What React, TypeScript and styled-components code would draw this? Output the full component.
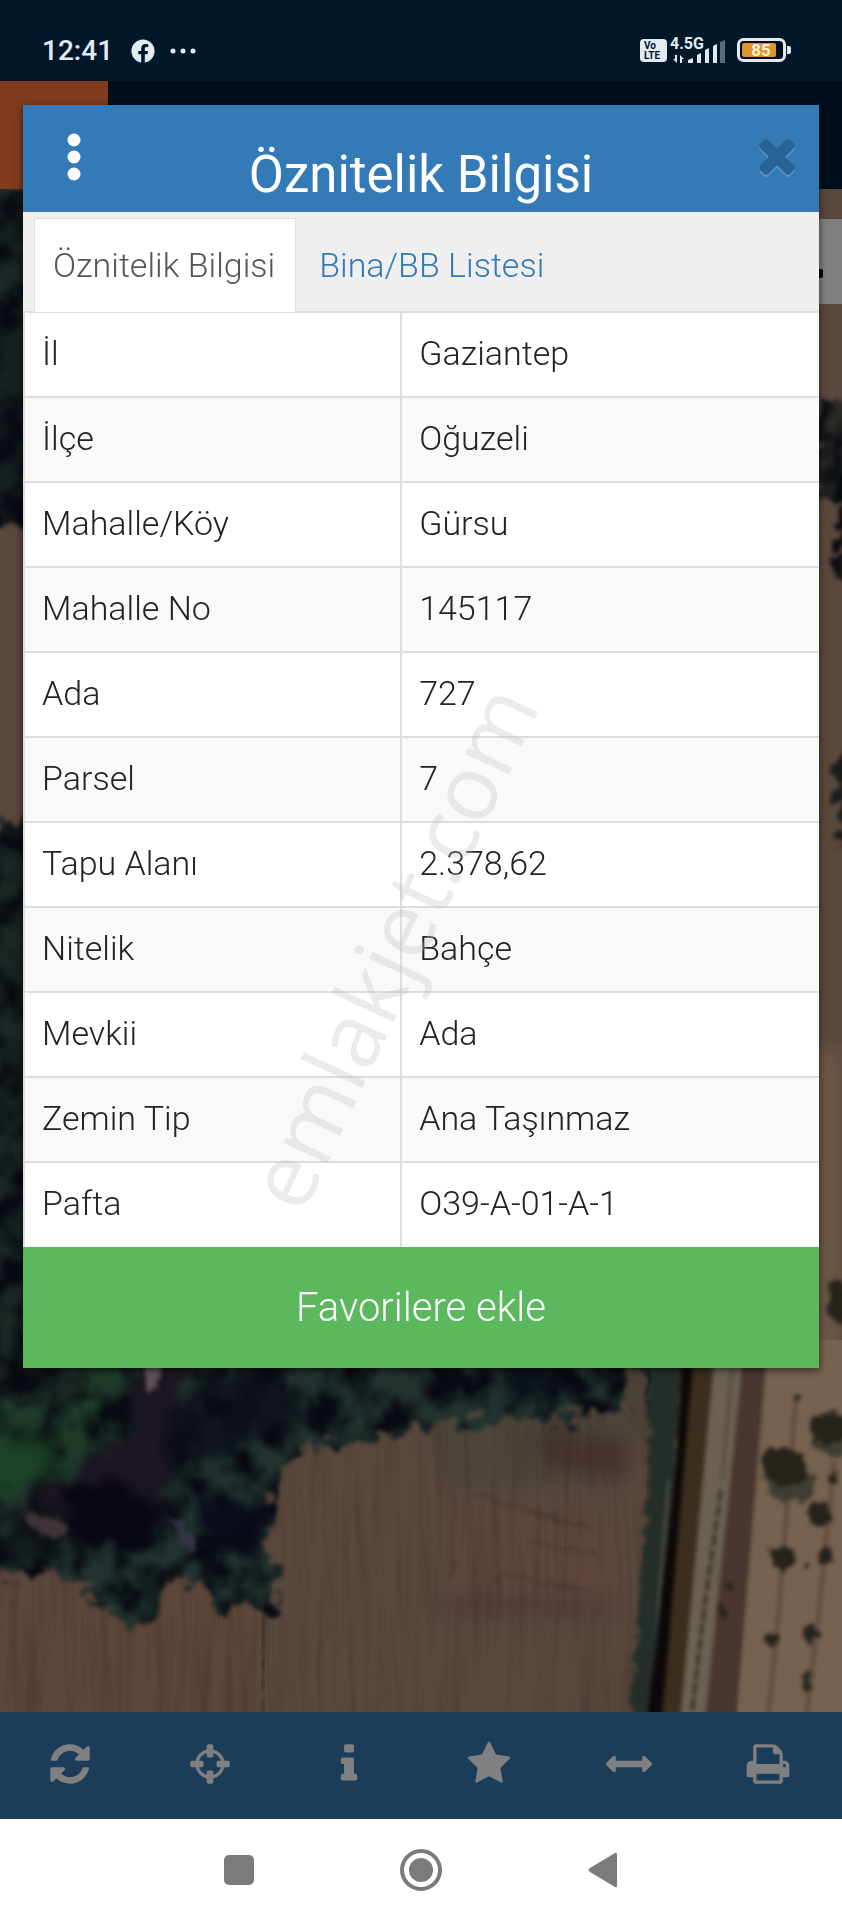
import { useState } from 'react';
import styled, { createGlobalStyle, css } from 'styled-components';
import { FaFacebook } from 'react-icons/fa';

const GlobalStyle = createGlobalStyle`
	* {
		box-sizing: border-box;
	}

	body {
		margin: 0;
		font-family: Roboto, 'Noto Sans', sans-serif;
		font-weight: 300;
		color: #222;
	}

	button {
		border: 0;
		padding: 0;
		background: none;
		font: inherit;
		color: inherit;
		cursor: pointer;
	}
`;

const Page = styled.div`
	position: relative;
	display: flex;
	flex-direction: column;
	min-height: 100vh;
`;

const StatusBar = styled.header`
	display: flex;
	align-items: center;
	justify-content: space-between;
	height: 81px;
	padding: 20px 50px 0 42px;
	background: #01182a;
	color: #e2ebf3;
`;

const StatusGroup = styled.div`
	display: flex;
	align-items: center;
`;

const Clock = styled.time`
	margin-right: 18px;
	font-size: 28px;
	line-height: 32px;
	font-weight: 500;
`;

const Dots = styled.svg`
	width: 26px;
	height: 6px;
	margin-left: 15px;
	fill: currentColor;
`;

const VolteBadge = styled.span`
	width: 27px;
	height: 23px;
	padding: 2px 0 0 4px;
	border-radius: 4px;
	background: #e2ebf3;
	color: #01182a;
	font-size: 10px;
	line-height: 10px;
	font-weight: 700;
`;

const Network = styled.div`
	display: grid;
	width: 56px;
	height: 26px;
	margin: 0 11px 0 3px;

	> * {
		grid-area: 1 / 1;
	}
`;

const NetworkType = styled.span`
	font-size: 16px;
	line-height: 12px;
	font-weight: 700;
`;

const AppBar = styled.div`
	height: 108px;
	background: #000e1b;
`;

const AppBarLogo = styled.div`
	width: 108px;
	height: 108px;
	background: #803c1c;
`;

const MapArea = styled.main`
	position: relative;
	display: flex;
	flex: 1;
	min-height: 1200px;
	overflow: hidden;
`;

const MapImage = styled.svg`
	position: absolute;
	inset: 0;
	width: 100%;
	height: 100%;
`;

const LayerButton = styled.button`
	position: absolute;
	top: 30px;
	right: 0;
	display: flex;
	align-items: center;
	justify-content: center;
	width: 68px;
	height: 85px;
	background: #808080;
	padding-top: 24px;
`;

const LayerMark = styled.span`
	width: 30px;
	height: 9px;
	border-radius: 2px;
	background: #000;
`;

const Toolbar = styled.nav`
	display: flex;
	height: 107px;
	padding: 0 4px 4px 0;
	background: #1b3d5a;
`;

const ToolButton = styled.button`
	display: flex;
	flex: 1;
	align-items: center;
	justify-content: center;
	color: #808080;
`;

const Glyph = styled.svg<{ $size?: number }>`
	width: ${({ $size = 46 }) => $size}px;
	height: ${({ $size = 46 }) => $size}px;
	fill: currentColor;
`;

const SystemNav = styled.nav`
	display: flex;
	justify-content: center;
	height: 101px;
	background: #fff;
`;

const SystemButton = styled.button`
	display: flex;
	align-items: center;
	justify-content: center;
	width: 182px;

	svg {
		width: 44px;
		height: 44px;
	}
`;

const Modal = styled.section`
	position: absolute;
	top: 105px;
	left: 23px;
	right: 23px;
	background: #fff;
	box-shadow: 0 2px 8px rgba(0, 0, 0, 0.6);
`;

const ModalHeader = styled.div`
	display: grid;
	grid-template-columns: 72px 1fr 72px;
	align-items: center;
	height: 107px;
	padding: 0 15px;
	background: #337ab7;
	color: #fff;
`;

const Title = styled.h1`
	margin: 0;
	padding-top: 32px;
	font-size: 51px;
	line-height: 56px;
	font-weight: 400;
	text-align: center;
`;

const CloseButton = styled.button`
	display: flex;
	justify-content: flex-end;
	padding-bottom: 8px;
	color: #2a6496;

	svg {
		filter: drop-shadow(0 2px 0 #5c95c6);
	}
`;

const Tabs = styled.div`
	display: flex;
	align-items: flex-end;
	height: 101px;
	padding: 0 11px;
	border-bottom: 2px solid #ddd;
	background: #efefef;
`;

const Tab = styled.button<{ $active: boolean }>`
	height: 95px;
	margin-bottom: -2px;
	padding: 0 20px 2px 18px;
	border: 1px solid transparent;
	font-size: 34px;
	line-height: 48px;
	color: #337ab7;

	& + & {
		margin-left: 4px;
	}

	${({ $active }) =>
		$active &&
		css`
			border-color: #ddd;
			background: #fff;
			color: #555;
		`}
`;

const Table = styled.table`
	width: 100%;
	border-collapse: collapse;
	table-layout: fixed;
	font-size: 34px;
	line-height: 48px;
`;

const cell = css`
	height: 85px;
	padding: 0 17px 4px;
	border: 2px solid #ddd;
	font-weight: 300;
	text-align: left;
`;

const Label = styled.th`
	${cell}
	width: 47.5%;
`;

const Value = styled.td`
	${cell}
	border-right-color: #fff;
`;

const Row = styled.tr`
	&:nth-child(even) {
		background: #f9f9f9;
	}

	&:first-child > * {
		height: 84px;
		border-top: 0;
	}

	&:last-child > * {
		border-bottom: 0;
	}
`;

const FavoriteButton = styled.button`
	display: block;
	width: 100%;
	height: 121px;
	background: #5cb85c;
	color: #fff;
	font-size: 40px;
	line-height: 48px;
`;

const Watermark = styled.div`
	position: absolute;
	top: 841px;
	left: 367px;
	transform: translate(-50%, -50%) rotate(-65deg);
	font-family: 'Open Sans', sans-serif;
	font-size: 90px;
	line-height: 96px;
	font-weight: 400;
	color: rgba(190, 190, 190, 0.3);
	pointer-events: none;
`;

const attributes = [
	['İl', 'Gaziantep'],
	['İlçe', 'Oğuzeli'],
	['Mahalle/Köy', 'Gürsu'],
	['Mahalle No', '145117'],
	['Ada', '727'],
	['Parsel', '7'],
	['Tapu Alanı', '2.378,62'],
	['Nitelik', 'Bahçe'],
	['Mevkii', 'Ada'],
	['Zemin Tip', 'Ana Taşınmaz'],
	['Pafta', 'O39-A-01-A-1'],
];

const timesPath =
	'M1490 1322q0 40-28 68l-136 136q-28 28-68 28t-68-28l-294-294-294 294q-28 28-68 28t-68-28l-136-136q-28-28-28-68t28-68l294-294-294-294q-28-28-28-68t28-68l136-136q28-28 68-28t68 28l294 294 294-294q28-28 68-28t68 28l136 136q28 28 28 68t-28 68l-294 294 294 294q28 28 28 68z';

const tools = [
	{
		name: 'Yenile',
		path: 'M1639 1056q0 5-1 7-64 268-268 434.5t-478 166.5q-146 0-282.5-55t-243.5-157l-129 129q-19 19-45 19t-45-19-19-45v-448q0-26 19-45t45-19h448q26 0 45 19t19 45-19 45l-137 137q71 66 161 102t187 36q134 0 250-65t186-179q11-17 53-117 8-23 30-23h192q13 0 22.5 9.5t9.5 22.5zm25-800v448q0 26-19 45t-45 19h-448q-26 0-45-19t-19-45 19-45l138-138q-148-137-349-137-134 0-250 65t-186 179q-11 17-53 117-8 23-30 23h-199q-13 0-22.5-9.5t-9.5-22.5v-7q65-268 270-434.5t480-166.5q146 0 284 55.5t245 156.5l130-129q19-19 45-19t45 19 19 45z',
	},
	{
		name: 'Konum',
		path: 'M1325 1024h-109q-26 0-45-19t-19-45v-128q0-26 19-45t45-19h109q-32-108-112.5-188.5t-188.5-112.5v109q0 26-19 45t-45 19h-128q-26 0-45-19t-19-45v-109q-108 32-188.5 112.5t-112.5 188.5h109q26 0 45 19t19 45v128q0 26-19 45t-45 19h-109q32 108 112.5 188.5t188.5 112.5v-109q0-26 19-45t45-19h128q26 0 45 19t19 45v109q108-32 188.5-112.5t112.5-188.5zm339-192v128q0 26-19 45t-45 19h-143q-37 161-154.5 278.5t-278.5 154.5v143q0 26-19 45t-45 19h-128q-26 0-45-19t-19-45v-143q-161-37-278.5-154.5t-154.5-278.5h-143q-26 0-45-19t-19-45v-128q0-26 19-45t45-19h143q37-161 154.5-278.5t278.5-154.5v-143q0-26 19-45t45-19h128q26 0 45 19t19 45v143q161 37 278.5 154.5t154.5 278.5h143q26 0 45 19t19 45z',
	},
	{
		name: 'Bilgi',
		path: 'M1216 1344v128q0 26-19 45t-45 19h-512q-26 0-45-19t-19-45v-128q0-26 19-45t45-19h64v-384h-64q-26 0-45-19t-19-45v-128q0-26 19-45t45-19h384q26 0 45 19t19 45v576h64q26 0 45 19t19 45zm-128-1152v192q0 26-19 45t-45 19h-256q-26 0-45-19t-19-45v-192q0-26 19-45t45-19h256q26 0 45 19t19 45z',
	},
	{
		name: 'Favoriler',
		path: 'M1728 647q0 22-26 48l-363 354 86 500q1 7 1 20 0 21-10.5 35.5t-30.5 14.5q-19 0-40-12l-449-236-449 236q-22 12-40 12-21 0-31.5-14.5t-10.5-35.5q0-6 2-20l86-500-364-354q-25-27-25-48 0-37 56-46l502-73 225-455q19-41 49-41t49 41l225 455 502 73q56 9 56 46z',
	},
	{
		name: 'Ölçüm',
		path: 'M1792 896q0 26-19 45l-256 256q-19 19-45 19t-45-19-19-45v-128h-1024v128q0 26-19 45t-45 19-45-19l-256-256q-19-19-19-45t19-45l256-256q19-19 45-19t45 19 19 45v128h1024v-128q0-26 19-45t45-19 45 19l256 256q19 19 19 45z',
	},
	{
		name: 'Yazdır',
		path: 'M448 1536h896v-256h-896v256zm0-640h896v-384h-160q-40 0-68-28t-28-68v-160h-640v640zm1152 64q0-26-19-45t-45-19-45 19-19 45 19 45 45 19 45-19 19-45zm128 0v416q0 13-9.5 22.5t-22.5 9.5h-224v160q0 40-28 68t-68 28h-960q-40 0-68-28t-28-68v-160h-224q-13 0-22.5-9.5t-9.5-22.5v-416q0-79 56.5-135.5t135.5-56.5h64v-544q0-40 28-68t68-28h672q40 0 88 20t76 48l152 152q28 28 48 76t20 88v256h64q79 0 135.5 56.5t56.5 135.5z',
	},
];

// x, y, rx, ry
const orchardTrees = [
	[784, 1467, 23, 20],
	[830, 1428, 20, 16],
	[821, 1514, 12, 12],
	[782, 1557, 11, 12],
	[825, 1556, 5, 10],
	[809, 1568, 3, 4],
	[811, 1632, 7, 9],
	[772, 1640, 6, 6],
	[807, 1681, 5, 8],
	[797, 1398, 3, 4],
	[834, 1477, 3, 5],
	[838, 1302, 10, 20],
	[722, 1610, 5, 8],
	[726, 1583, 3, 4],
];

const SatelliteMap = () => (
	<MapImage
		viewBox='0 189 842 1523'
		preserveAspectRatio='xMidYMax slice'
		colorInterpolationFilters='sRGB'
		aria-hidden='true'
	>
		<defs>
			<filter id='foliage' x='-5%' y='-5%' width='110%' height='110%'>
				<feTurbulence type='fractalNoise' baseFrequency='0.05' numOctaves='4' seed='4' result='edge' />
				<feDisplacementMap
					in='SourceGraphic'
					in2='edge'
					scale='45'
					xChannelSelector='R'
					yChannelSelector='G'
					result='shape'
				/>
				<feTurbulence type='fractalNoise' baseFrequency='0.035 0.03' numOctaves='5' seed='11' />
				<feColorMatrix values='0 0 0 0 0.03  0 0 0 0 0.04  0 0 0 0 0.07  3 0 0 0 -1.1' />
				<feComposite in2='shape' operator='in' result='shade' />
				<feMerge result='trees'>
					<feMergeNode in='shape' />
					<feMergeNode in='shade' />
				</feMerge>
				<feGaussianBlur in='trees' stdDeviation='2' />
			</filter>
			<filter id='rough' x='-20%' y='-20%' width='140%' height='140%'>
				<feTurbulence type='fractalNoise' baseFrequency='0.08' numOctaves='3' seed='2' result='noise' />
				<feDisplacementMap
					in='SourceGraphic'
					in2='noise'
					scale='16'
					xChannelSelector='R'
					yChannelSelector='G'
				/>
				<feGaussianBlur stdDeviation='2' />
			</filter>
			<filter id='shadow' x='-20%' y='-20%' width='140%' height='140%'>
				<feTurbulence type='fractalNoise' baseFrequency='0.05' numOctaves='3' seed='9' result='noise' />
				<feDisplacementMap
					in='SourceGraphic'
					in2='noise'
					scale='40'
					xChannelSelector='R'
					yChannelSelector='G'
				/>
				<feGaussianBlur stdDeviation='4' />
			</filter>
			<filter id='soil' x='0' y='0' width='100%' height='100%'>
				<feTurbulence type='fractalNoise' baseFrequency='0.11 0.008' numOctaves='3' seed='7' />
				<feColorMatrix values='0 0 0 0 0.2  0 0 0 0 0.15  0 0 0 0 0.12  2 0 0 0 -0.8' />
			</filter>
			<filter id='blur' x='-20%' y='-5%' width='140%' height='110%'>
				<feGaussianBlur stdDeviation='2' />
			</filter>
			<filter id='soft' x='-20%' y='-20%' width='140%' height='140%'>
				<feGaussianBlur stdDeviation='10' />
			</filter>
		</defs>

		<rect y='189' width='842' height='1523' fill='#5b483d' />
		<path d='M755 1050H842V1712H722Z' fill='#6d5848' filter='url(#soft)' />
		<path d='M765 1340H860V1730H735Z' fill='#77624f' />
		<path d='M0 1580H262L254 1712H0Z' fill='#5d463a' />

		<g filter='url(#soft)'>
			<path d='M420 1405H640L630 1480L450 1490Z' fill='#4c453a' />
			<path d='M530 1432L630 1440L628 1482L550 1465Z' fill='#453333' />
			<path d='M460 1500L625 1530L612 1600L455 1590Z' fill='#60473c' />
			<path d='M440 1595L620 1600L615 1616L440 1615Z' fill='#513c37' />
		</g>
		<g stroke='#46362f' strokeWidth='3' fill='none' opacity='.7' filter='url(#rough)'>
			<path d='M470 1490Q540 1515 595 1530' />
			<path d='M530 1542L605 1556' />
			<path d='M490 1575L590 1590' />
			<path d='M454 1480L450 1580' strokeWidth='2' />
		</g>
		<rect y='1368' width='650' height='344' filter='url(#soil)' opacity='.3' />
		<path d='M264 1605L262 1720' stroke='#30251f' strokeWidth='4' filter='url(#rough)' />

		<g filter='url(#foliage)'>
			<path
				d='M-40 1330H690L640 1400L600 1412L520 1422L430 1422L395 1436L340 1445L305 1444L284 1475L270 1510L260 1545L282 1590L275 1615L235 1607L208 1605L192 1568L165 1585L150 1615L130 1630L105 1612L75 1580L-40 1565Z'
				fill='#22332f'
			/>
			<path d='M-40 1340H130L130 1420L60 1480L-40 1500Z' fill='#1e3a29' />
			<path d='M-40 180H70V335H-40ZM-40 820H70V1400H-40Z' fill='#1c2825' />
			<path d='M-40 320H70V530H-40Z' fill='#172122' />
		</g>
		<path d='M-20 1445L50 1435L60 1470L-20 1505Z' fill='#1c4427' filter='url(#soft)' />
		<g filter='url(#shadow)'>
			<path d='M140 1350H190L165 1490L150 1530L60 1520L30 1500L75 1475L125 1440Z' fill='#1b1620' />
			<path d='M66 1490L130 1480L160 1510L155 1545L100 1550L60 1530Z' fill='#090712' />
			<path d='M240 1360H285L300 1425L250 1440L160 1480L170 1420Z' fill='#0b0e17' opacity='.75' />
			<path d='M190 1502H268L262 1560L215 1550Z' fill='#080b17' opacity='.9' />
			<path d='M510 1365H560L540 1395H505Z' fill='#080b17' opacity='.8' />
			<path d='M0 1510H60V1560H0Z' fill='#0c1015' opacity='.7' />
		</g>
		<g filter='url(#rough)'>
			<path d='M148 1360H166L156 1388L144 1392Z' fill='#61505a' />
			<path d='M20 1514L62 1516L66 1536L40 1536Z' fill='#3f3336' />
			<path d='M170 1514L184 1520L196 1550L186 1550Z' fill='#343445' />
			<path d='M624 1362L645 1375L648 1440L630 1425Z' fill='#4b4137' />
		</g>

		<path d='M650 1350H686L652 1730H628L648 1500Z' fill='#252f2a' filter='url(#rough)' />
		<g filter='url(#blur)'>
			<path d='M669 1480L652 1690' stroke='#5f5d58' strokeWidth='2' />
			<path d='M683 1340H697L661 1730H646L676 1460Z' fill='#0d0908' />
			<path d='M695 1340H717L682 1730H661Z' fill='#3b2e1d' />
			<path d='M716 1340H746L703 1730H679Z' fill='#6b6252' />
			<path d='M732 1368L722 1480' stroke='#5a5143' strokeWidth='4' />
			<path d='M745 1340H768L735 1730H705Z' fill='#48362f' />
		</g>
		<path d='M721 1490L704 1610L692 1712' stroke='#2e271f' strokeWidth='3' strokeDasharray='12 3' fill='none' filter='url(#blur)' />
		<path d='M796 1398L778 1620L768 1720M834 1460L818 1620L806 1720' stroke='#55443a' strokeWidth='3' fill='none' filter='url(#blur)' />
		<g filter='url(#rough)'>
			<ellipse cx='790' cy='1482' rx='24' ry='20' fill='#3f3d33' />
			<ellipse cx='832' cy='1440' rx='18' ry='16' fill='#3f3d33' />
			{orchardTrees.map(([x, y, rx, ry]) => (
				<ellipse key={`${x}-${y}`} cx={x} cy={y} rx={rx} ry={ry} fill='#26221c' />
			))}
		</g>
		<g filter='url(#foliage)'>
			<path d='M815 400H880V500H815Z' fill='#2c2b26' />
			<path d='M838 485H880V580H838Z' fill='#232220' />
			<path d='M838 750H880V840H838Z' fill='#1c2020' />
		</g>
	</MapImage>
);

const SignalBars = () => (
	<svg width='56' height='26' viewBox='0 0 56 26' fill='currentColor' aria-hidden='true'>
		<path d='M7 17V25L3 21H5V17ZM10 25V17L14 21H12V25Z' />
		<path d='M18 25V22L23 20V25ZM27 25V17L31 15V25ZM35 25V12L39 10V25ZM43 25V8L47 6V25Z' />
		<path d='M50 25V4L55 2V25Z' opacity='.4' />
	</svg>
);

const Battery = () => (
	<svg width='55' height='25' viewBox='0 0 55 25' role='img' aria-label='85'>
		<rect x='1.5' y='1.5' width='46' height='21' rx='5' fill='#01101c' stroke='#e2ebf3' strokeWidth='3' />
		<rect x='5' y='5' width='34' height='14' rx='2' fill='#dd962d' />
		<path d='M50 8H52Q54 8 54 10V14Q54 16 52 16H50Z' fill='#e2ebf3' />
		<text x='24' y='18' textAnchor='middle' fontSize='17' fontWeight='700' fill='#fff3cf'>
			85
		</text>
	</svg>
);

const App = () => {
	const [activeTab, setActiveTab] = useState(0);

	return (
		<Page>
			<GlobalStyle />
			<StatusBar>
				<StatusGroup>
					<Clock>12:41</Clock>
					<FaFacebook size={24} />
					<Dots viewBox='0 0 26 6'>
						<circle cx='3' cy='3' r='2.5' />
						<circle cx='13' cy='3' r='2.5' />
						<circle cx='23' cy='3' r='2.5' />
					</Dots>
				</StatusGroup>
				<StatusGroup>
					<VolteBadge>
						Vo
						<br />
						LTE
					</VolteBadge>
					<Network>
						<NetworkType>4.5G</NetworkType>
						<SignalBars />
					</Network>
					<Battery />
				</StatusGroup>
			</StatusBar>
			<AppBar>
				<AppBarLogo />
			</AppBar>
			<MapArea>
				<SatelliteMap />
				<LayerButton aria-label='Katmanlar'>
					<LayerMark />
				</LayerButton>
			</MapArea>
			<Toolbar>
				{tools.map(tool => (
					<ToolButton key={tool.name} aria-label={tool.name}>
						<Glyph viewBox='0 0 1792 1792'>
							<path d={tool.path} />
						</Glyph>
					</ToolButton>
				))}
			</Toolbar>
			<SystemNav>
				<SystemButton aria-label='Son uygulamalar'>
					<svg viewBox='0 0 44 44' fill='#7b7b7b'>
						<rect x='7' y='7' width='30' height='30' rx='5' />
					</svg>
				</SystemButton>
				<SystemButton aria-label='Ana ekran'>
					<svg viewBox='0 0 44 44' fill='#7b7b7b'>
						<circle cx='22' cy='22' r='19' fill='none' stroke='#7b7b7b' strokeWidth='4' />
						<circle cx='22' cy='22' r='12' />
					</svg>
				</SystemButton>
				<SystemButton aria-label='Geri'>
					<svg viewBox='0 0 44 44' fill='#7b7b7b'>
						<path d='M34 5Q36 4 36 6V38Q36 40 34 39L9 24Q6 22 9 20Z' />
					</svg>
				</SystemButton>
			</SystemNav>

			<Modal role='dialog' aria-labelledby='modal-title'>
				<ModalHeader>
					<button aria-label='Menü'>
						<svg width='14' height='48' viewBox='0 0 14 48' fill='#fff'>
							<circle cx='7' cy='7' r='6.5' />
							<circle cx='7' cy='24' r='6.5' />
							<circle cx='7' cy='41' r='6.5' />
						</svg>
					</button>
					<Title id='modal-title'>Öznitelik Bilgisi</Title>
					<CloseButton aria-label='Kapat'>
						<Glyph $size={54} viewBox='0 0 1792 1792'>
							<path d={timesPath} />
						</Glyph>
					</CloseButton>
				</ModalHeader>
				<Tabs role='tablist'>
					{['Öznitelik Bilgisi', 'Bina/BB Listesi'].map((name, index) => (
						<Tab
							key={name}
							role='tab'
							aria-selected={activeTab === index}
							$active={activeTab === index}
							onClick={() => setActiveTab(index)}
						>
							{name}
						</Tab>
					))}
				</Tabs>
				<Table>
					<tbody>
						{attributes.map(([label, value]) => (
							<Row key={label}>
								<Label scope='row'>{label}</Label>
								<Value>{value}</Value>
							</Row>
						))}
					</tbody>
				</Table>
				<FavoriteButton>Favorilere ekle</FavoriteButton>
				<Watermark aria-hidden='true'>emlakjet.com</Watermark>
			</Modal>
		</Page>
	);
};

export default App;
